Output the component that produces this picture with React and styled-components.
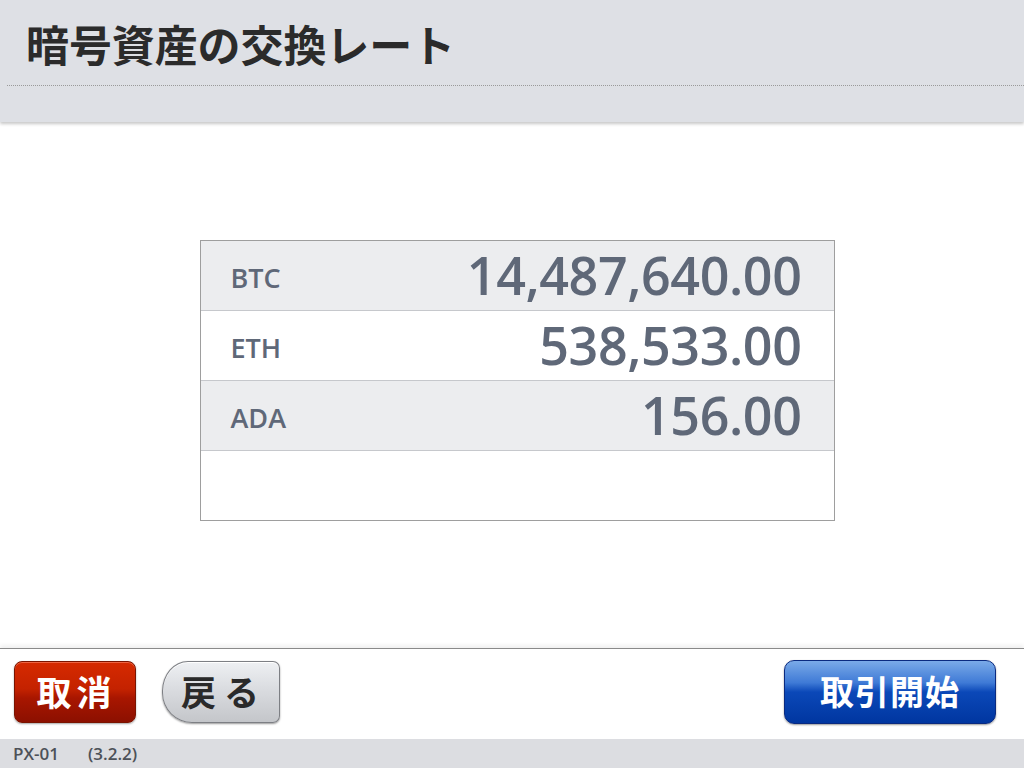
import React from "react";
import styled, { createGlobalStyle } from "styled-components";

const GlobalStyle = createGlobalStyle`
  *, *::before, *::after {
    box-sizing: border-box;
  }
  html, body {
    margin: 0;
    padding: 0;
    background: #ffffff;
  }
  body {
    font-family: "Open Sans", "Noto Sans CJK JP", sans-serif;
  }
`;

const Screen = styled.div`
  width: 1024px;
  height: 768px;
  display: flex;
  flex-direction: column;
  overflow: hidden;
`;

const Header = styled.header`
  height: 122px;
  flex-shrink: 0;
  background: #dee0e5;
  box-shadow: 0 2px 3px rgba(0, 0, 0, 0.22);
  position: relative;
  z-index: 1;
  display: flex;
  flex-direction: column;
`;

const TitleBar = styled.div`
  height: 86px;
  margin-left: 7px;
  border-bottom: 1px dotted #9a9a9a;
  display: flex;
  align-items: center;
`;

const Title = styled.h1`
  margin: 0 0 0 19px;
  font-family: "Noto Sans CJK JP", sans-serif;
  font-size: 43px;
  font-weight: 700;
  color: #2b2b2b;
  letter-spacing: -0.1px;
`;

const Main = styled.main`
  flex: 1;
  display: flex;
  justify-content: center;
  align-items: flex-start;
  padding-top: 118px;
  padding-left: 10px;
`;

const RateTable = styled.div`
  width: 635px;
  border: 1px solid #9e9e9e;
  display: flex;
  flex-direction: column;
`;

const Row = styled.div`
  height: ${(p) => (p.$last ? "69px" : "70px")};
  display: flex;
  align-items: center;
  justify-content: space-between;
  padding: 0 32px 0 30px;
  background: ${(p) => (p.$shaded ? "#ecedef" : "#ffffff")};
  border-bottom: ${(p) => (p.$last ? "none" : "1px solid #c6c8cc")};
`;

const Symbol = styled.span`
  font-size: 27px;
  font-weight: 600;
  color: #5f6878;
  padding-top: 4px;
`;

const Value = styled.span`
  font-size: 52px;
  font-weight: 600;
  color: #5f6878;
  letter-spacing: -0.4px;
  line-height: 1;
  padding-bottom: 2px;
`;

const Footer = styled.footer`
  flex-shrink: 0;
  display: flex;
  flex-direction: column;
`;

const ButtonBar = styled.div`
  height: 91px;
  border-top: 1px solid #8a8a8a;
  box-shadow: 0 -3px 4px rgba(0, 0, 0, 0.06);
  display: flex;
  align-items: flex-start;
  padding: 12px 28px 0 14px;
  gap: 26px;
  background: #ffffff;
  position: relative;
`;

const Spacer = styled.div`
  flex: 1;
`;

const Button = styled.button`
  height: ${(p) => (p.$tall ? "64px" : "62px")};
  margin-top: ${(p) => (p.$tall ? "-1px" : "0")};
  padding: 0 0 3px 0;
  font-family: "Noto Sans CJK JP", sans-serif;
  font-weight: 700;
  font-size: 35px;
  line-height: 1;
  cursor: pointer;
  display: flex;
  align-items: center;
  justify-content: center;
`;

const CancelButton = styled(Button)`
  width: 122px;
  border-radius: 8px;
  border: 1px solid #7a1400;
  background: linear-gradient(#d62a00 0%, #c42200 45%, #a81600 60%, #8c1000 100%);
  color: #ffffff;
  letter-spacing: 5px;
  text-indent: 3px;
  box-shadow: inset 0 1px 0 rgba(255, 140, 110, 0.6), 0 1px 2px rgba(0, 0, 0, 0.35);
`;

const BackButton = styled(Button)`
  width: 118px;
  border-radius: 26px 7px 7px 30px / 30px 7px 7px 30px;
  border: 1px solid #7d7f84;
  background: linear-gradient(#eef0f3 0%, #dadce0 45%, #c4c6ca 100%);
  color: #2a2a2a;
  letter-spacing: 8px;
  text-indent: 6px;
  box-shadow: inset 0 1px 0 #ffffff, 0 1px 2px rgba(0, 0, 0, 0.4);
`;

const StartButton = styled(Button)`
  width: 212px;
  border-radius: 10px;
  border: 1px solid #0a2a80;
  background: linear-gradient(#7aaae8 0%, #3f7ad6 35%, #0b48b8 50%, #0036a0 100%);
  color: #ffffff;
  font-size: 34px;
  letter-spacing: 1px;
  box-shadow: 0 1px 2px rgba(0, 0, 0, 0.4);
`;

const StatusBar = styled.div`
  height: 29px;
  background: #dcdde1;
  display: flex;
  align-items: center;
  padding-left: 13px;
  gap: 29px;
  font-size: 17px;
  font-weight: 600;
  color: #4d5158;
`;

const rates = [
  { symbol: "BTC", value: "14,487,640.00" },
  { symbol: "ETH", value: "538,533.00" },
  { symbol: "ADA", value: "156.00" },
  { symbol: "", value: "" },
];

export default function App() {
  return (
    <Screen>
      <GlobalStyle />
      <Header>
        <TitleBar>
          <Title>暗号資産の交換レート</Title>
        </TitleBar>
      </Header>
      <Main>
        <RateTable>
          {rates.map((r, i) => (
            <Row key={i} $shaded={i % 2 === 0} $last={i === rates.length - 1}>
              <Symbol>{r.symbol}</Symbol>
              <Value>{r.value}</Value>
            </Row>
          ))}
        </RateTable>
      </Main>
      <Footer>
        <ButtonBar>
          <CancelButton>取消</CancelButton>
          <BackButton>戻る</BackButton>
          <Spacer />
          <StartButton $tall>取引開始</StartButton>
        </ButtonBar>
        <StatusBar>
          <span>PX-01</span>
          <span>(3.2.2)</span>
        </StatusBar>
      </Footer>
    </Screen>
  );
}
